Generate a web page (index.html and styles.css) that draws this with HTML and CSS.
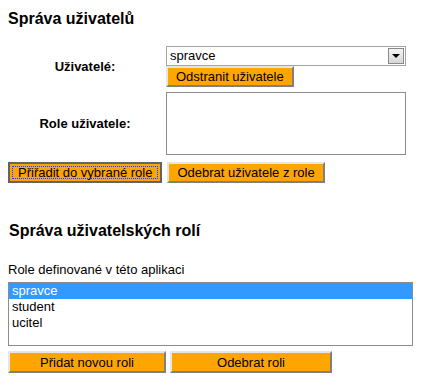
FILE: index.html
```html
<!DOCTYPE html>
<html lang="cs">
<head>
    <meta charset="UTF-8">
    <meta name="viewport" content="width=device-width, initial-scale=1.0">
    <title>Správa uživatelů</title>
    <link rel="stylesheet" href="styles.css">
</head>
<body>
    <div class="page">
        <!-- Sekce uzivatelu -->
        <h2 class="title">Správa uživatelů</h2>

        <div class="userGrid">
            <div class="label">Uživatelé:</div>
            <div class="field">
                <div class="combo">
                    <span class="comboText">spravce</span>
                    <span class="comboArrow"></span>
                </div>
                <button class="btn">Odstranit uživatele</button>
            </div>

            <div class="label">Role uživatele:</div>
            <div class="field">
                <div class="listbox userRoles"></div>
            </div>
        </div>

        <div class="btnRow">
            <button class="btn focused">Přiřadit do vybrané role</button>
            <button class="btn">Odebrat uživatele z role</button>
        </div>

        <!-- Sekce roli -->
        <h2 class="title second">Správa uživatelských rolí</h2>

        <div class="caption">Role definované v této aplikaci</div>
        <div class="listbox roles">
            <div class="option selected">spravce</div>
            <div class="option">student</div>
            <div class="option">ucitel</div>
        </div>

        <div class="btnRow bottom">
            <button class="btn wide">Přidat novou roli</button>
            <button class="btn wide">Odebrat roli</button>
        </div>
    </div>
</body>
</html>
```

FILE: styles.css
```css
body {
    margin: 0;
    background-color: #ffffff;
    color: #000000;
    font-family: "Liberation Sans", Arial, sans-serif;
    font-size: 13px;
}
.page {
    padding: 10px 8px 0 8px;
}
.title {
    margin: 0 0 18px 0;
    font-size: 16px;
    line-height: 18px;
    font-weight: bold;
}
.title.second {
    margin: 39px 0 22px 0;
    padding-left: 1px;
}
.userGrid {
    display: grid;
    grid-template-columns: 154px 240px;
    column-gap: 4px;
    row-gap: 5px;
}
.label {
    align-self: center;
    text-align: center;
    font-weight: bold;
    line-height: 15px;
}
.field {
    display: flex;
    flex-direction: column;
    align-items: flex-start;
}
.combo {
    position: relative;
    box-sizing: border-box;
    width: 240px;
    height: 20px;
    border: 1px solid #a5a5a5;
    background-color: #ffffff;
}
.comboText {
    display: block;
    padding-left: 3px;
    line-height: 17px;
}
/* sipka rozbalovaciho seznamu */
.comboArrow {
    position: absolute;
    top: 1px;
    right: 1px;
    width: 14px;
    height: 14px;
    border: 1px solid #8a8a8a;
    background: linear-gradient(#f4f4f4, #d6d6d6);
}
.comboArrow::after {
    content: "";
    position: absolute;
    left: 3px;
    top: 5px;
    border-left: 4px solid transparent;
    border-right: 4px solid transparent;
    border-top: 4px solid #000000;
}
.btn {
    box-sizing: border-box;
    height: 21px;
    padding: 0 8px;
    font-family: "Liberation Sans", Arial, sans-serif;
    font-size: 13px;
    line-height: 15px;
    color: #000000;
    background-color: #ffa500;
    border: 2px solid;
    border-color: #e6e6e6 #808080 #808080 #e6e6e6;
    border-radius: 0;
    cursor: pointer;
}
.btn.focused {
    border-color: #646464;
    outline: 1px dotted #1a3cff;
    outline-offset: -5px;
}
.listbox {
    box-sizing: border-box;
    border: 1px solid #8c8c8c;
    background-color: #ffffff;
}
.userRoles {
    width: 240px;
    height: 63px;
}
.btnRow {
    display: flex;
    gap: 5px;
    margin-top: 7px;
}
.caption {
    line-height: 15px;
    margin-bottom: 5px;
}
.roles {
    width: 405px;
    height: 64px;
}
.option {
    height: 16px;
    line-height: 16px;
    padding-left: 3px;
}
.option.selected {
    background-color: #3399ff;
    color: #ffffff;
}
.btnRow.bottom {
    margin-top: 5px;
    gap: 4px;
}
.btn.wide {
    width: 158px;
    height: 22px;
}
.btn.wide + .btn.wide {
    width: 162px;
}
```
